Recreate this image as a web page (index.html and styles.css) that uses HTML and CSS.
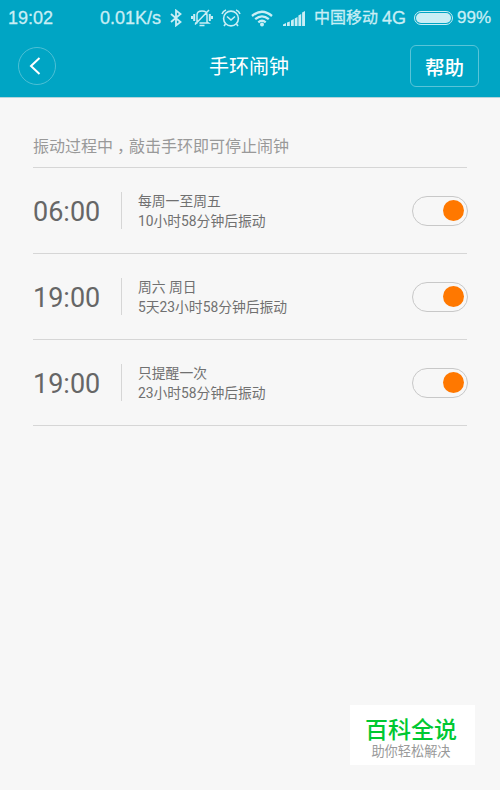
FILE: index.html
```
<!DOCTYPE html>
<html lang="zh-CN">
<head>
    <meta charset="UTF-8">
    <meta name="viewport" content="width=device-width, initial-scale=1.0">
    <title>手环闹钟</title>
    <link rel="stylesheet" href="styles.css">
</head>
<body>
    <div class="top">
        <div class="status-bar">
            <span class="clock">19:02</span>
            <span class="speed">0.01K/s</span>
            <svg class="bluetooth" width="12" height="18" viewBox="0 0 12 18" fill="none" stroke="currentColor" stroke-width="1.8">
                <path d="M1 5l9.5 8L6 16.5v-15L10.5 5 1 13"/>
            </svg>
            <svg class="vibrate" width="22" height="18" viewBox="0 0 22 18" fill="none" stroke="currentColor" stroke-width="1.5">
                <path d="M6 13V6C6 3.500 8 2 11 2s5 1.500 5 4v7l1.500 1H8.500M4 14h2.500M8.500 16.500h5M4 15.500L18 1"/>
                <path d="M3.200 5v7M1 7v3M18.800 5v7M21 7v3" stroke-width="2"/>
            </svg>
            <svg class="alarm" width="20" height="18" viewBox="0 0 20 18" fill="none" stroke="currentColor" stroke-width="1.6">
                <circle cx="10" cy="9.5" r="7.4"/>
                <path d="M6 7.500l4 3.500 4-3.500M1 5Q2 2 5 1M19 5Q18 2 15 1M4.500 15L3 17M15.500 15L17 17"/>
            </svg>
            <svg class="wifi" width="22" height="17" viewBox="0 0 22 17" fill="none" stroke="currentColor" stroke-width="2.3">
                <path d="M1 6Q11-2.500 21 6M4.200 9.200Q11 3.500 17.800 9.200M7.300 12.300Q11 9.300 14.700 12.300"/>
                <circle cx="11" cy="14.5" r="2" fill="currentColor" stroke="none"/>
            </svg>
            <svg class="signal" width="22" height="16" viewBox="0 0 22 16" fill="currentColor">
                <path d="M0 16v-1.500L3 13v3zM4 16v-3.500l2.800-1V16zM8 16v-5.500L10.800 9v7zM11.700 16V8.500L14.500 7v9zM15.400 16V5.500L18.200 4v12zM19.100 16V2.500L22 1v15z"/>
            </svg>
            <span class="carrier">中国移动</span>
            <span class="network">4G</span>
            <span class="battery"></span>
            <span class="percent">99%</span>
        </div>
        <div class="header">
            <button class="back" aria-label="返回">
                <svg width="12" height="20" viewBox="0 0 12 20" fill="none" stroke="currentColor" stroke-width="2">
                    <path d="M10.500 2L2 10l8.500 8"/>
                </svg>
            </button>
            <h1>手环闹钟</h1>
            <button class="help">帮助</button>
        </div>
    </div>

    <div class="content">
        <p class="notice">振动过程中<span class="comma">，</span>敲击手环即可停止闹钟</p>
        <div class="alarm-item">
            <div class="time">06:00</div>
            <div class="info">
                <div>每周一至周五</div>
                <div>10小时58分钟后振动</div>
            </div>
            <div class="switch"></div>
        </div>
        <div class="alarm-item">
            <div class="time">19:00</div>
            <div class="info">
                <div>周六 周日</div>
                <div>5天23小时58分钟后振动</div>
            </div>
            <div class="switch"></div>
        </div>
        <div class="alarm-item">
            <div class="time">19:00</div>
            <div class="info">
                <div>只提醒一次</div>
                <div>23小时58分钟后振动</div>
            </div>
            <div class="switch"></div>
        </div>
    </div>

    <div class="watermark">
        <div class="brand">百科全说</div>
        <div class="slogan">助你轻松解决</div>
    </div>
</body>
</html>
```
FILE: styles.css
```
* {
    box-sizing: border-box;
}
body {
    margin: 0;
    height: 790px;
    overflow: hidden;
    background-color: #f7f7f7;
    font-family: Roboto, "Noto Sans CJK SC", sans-serif;
}
.top {
    height: 98px;
    background-color: #00a5c4;
    border-bottom: 1px solid #b5d5dc;
}
.status-bar {
    display: flex;
    align-items: center;
    height: 36px;
    padding: 0 8px;
    color: #c9eef5;
    font-family: "Liberation Sans", "Noto Sans CJK SC", sans-serif;
    font-size: 18px;
    line-height: 36px;
    white-space: nowrap;
    -webkit-text-stroke: 0.3px #c9eef5;
}
.status-bar svg {
    flex: none;
}
.clock {
    width: 92px;
}
.speed {
    width: 70px;
}
.vibrate {
    margin-left: 9px;
}
.alarm {
    margin-left: 8px;
}
.wifi {
    margin-left: 10px;
}
.signal {
    margin: 0 9px 1px 10px;
}
.carrier {
    width: 68px;
    font-size: 16px;
}
.network {
    width: 32px;
}
.battery {
    display: flex;
    width: 39px;
    height: 14px;
    padding: 1px;
    border: 1px solid #c9eef5;
    border-radius: 7px;
}
.battery::before {
    content: "";
    flex: 1;
    border-radius: 5px;
    background-color: #c9eef5;
}
.percent {
    margin-left: 4px;
    font-size: 17px;
}
.header {
    display: flex;
    justify-content: space-between;
    align-items: center;
    height: 60px;
    padding: 0 21px 0 18px;
    color: #fff;
}
.header button {
    display: flex;
    justify-content: center;
    align-items: center;
    padding: 0;
    background: none;
    color: #fff;
    font-family: inherit;
}
.header .back {
    width: 38px;
    height: 38px;
    padding-right: 4px;
    border: 1px solid #4dc0d5;
    border-radius: 50%;
}
.header h1 {
    margin: 0 0 2px 32px;
    font-size: 20px;
    font-weight: 400;
}
.header .help {
    width: 69px;
    height: 42px;
    border: 1px solid #59c4d8;
    border-radius: 6px;
    font-size: 19.5px;
    font-weight: 500;
}
.content {
    padding: 37px 33px 0;
}
.notice {
    height: 33px;
    margin: 0;
    border-bottom: 1px solid #d6d6d6;
    color: #999;
    font-size: 16px;
    line-height: 24px;
}
/* 逗号在字框内居中 */
.comma {
    margin: 0 4px;
    font-feature-settings: "halt";
}
.alarm-item {
    display: flex;
    align-items: center;
    height: 86px;
    border-bottom: 1px solid #d6d6d6;
}
.time {
    width: 88px;
    padding-top: 2px;
    color: #666;
    font-size: 27px;
}
.info {
    flex: 1;
    height: 37px;
    padding-left: 16px;
    border-left: 1px solid #d6d6d6;
    color: #707070;
    font-size: 13.8px;
    line-height: 19.5px;
}
.switch {
    display: flex;
    justify-content: flex-end;
    align-items: center;
    width: 56px;
    height: 30px;
    margin-right: -1px;
    padding-right: 3px;
    border: 1px solid #c8c8c8;
    border-radius: 15px;
}
.switch::after {
    content: "";
    width: 21px;
    height: 21px;
    border-radius: 50%;
    background-color: #ff7800;
}
.watermark {
    position: absolute;
    left: 350px;
    top: 705px;
    width: 125px;
    height: 60px;
    padding-right: 3px;
    background-color: #fff;
    text-align: center;
}
.brand {
    height: 36px;
    padding-top: 9px;
    color: #00c832;
    font-size: 23px;
    font-weight: 500;
    line-height: 34px;
}
.slogan {
    color: #999;
    font-size: 13.2px;
    line-height: 22px;
}
```
